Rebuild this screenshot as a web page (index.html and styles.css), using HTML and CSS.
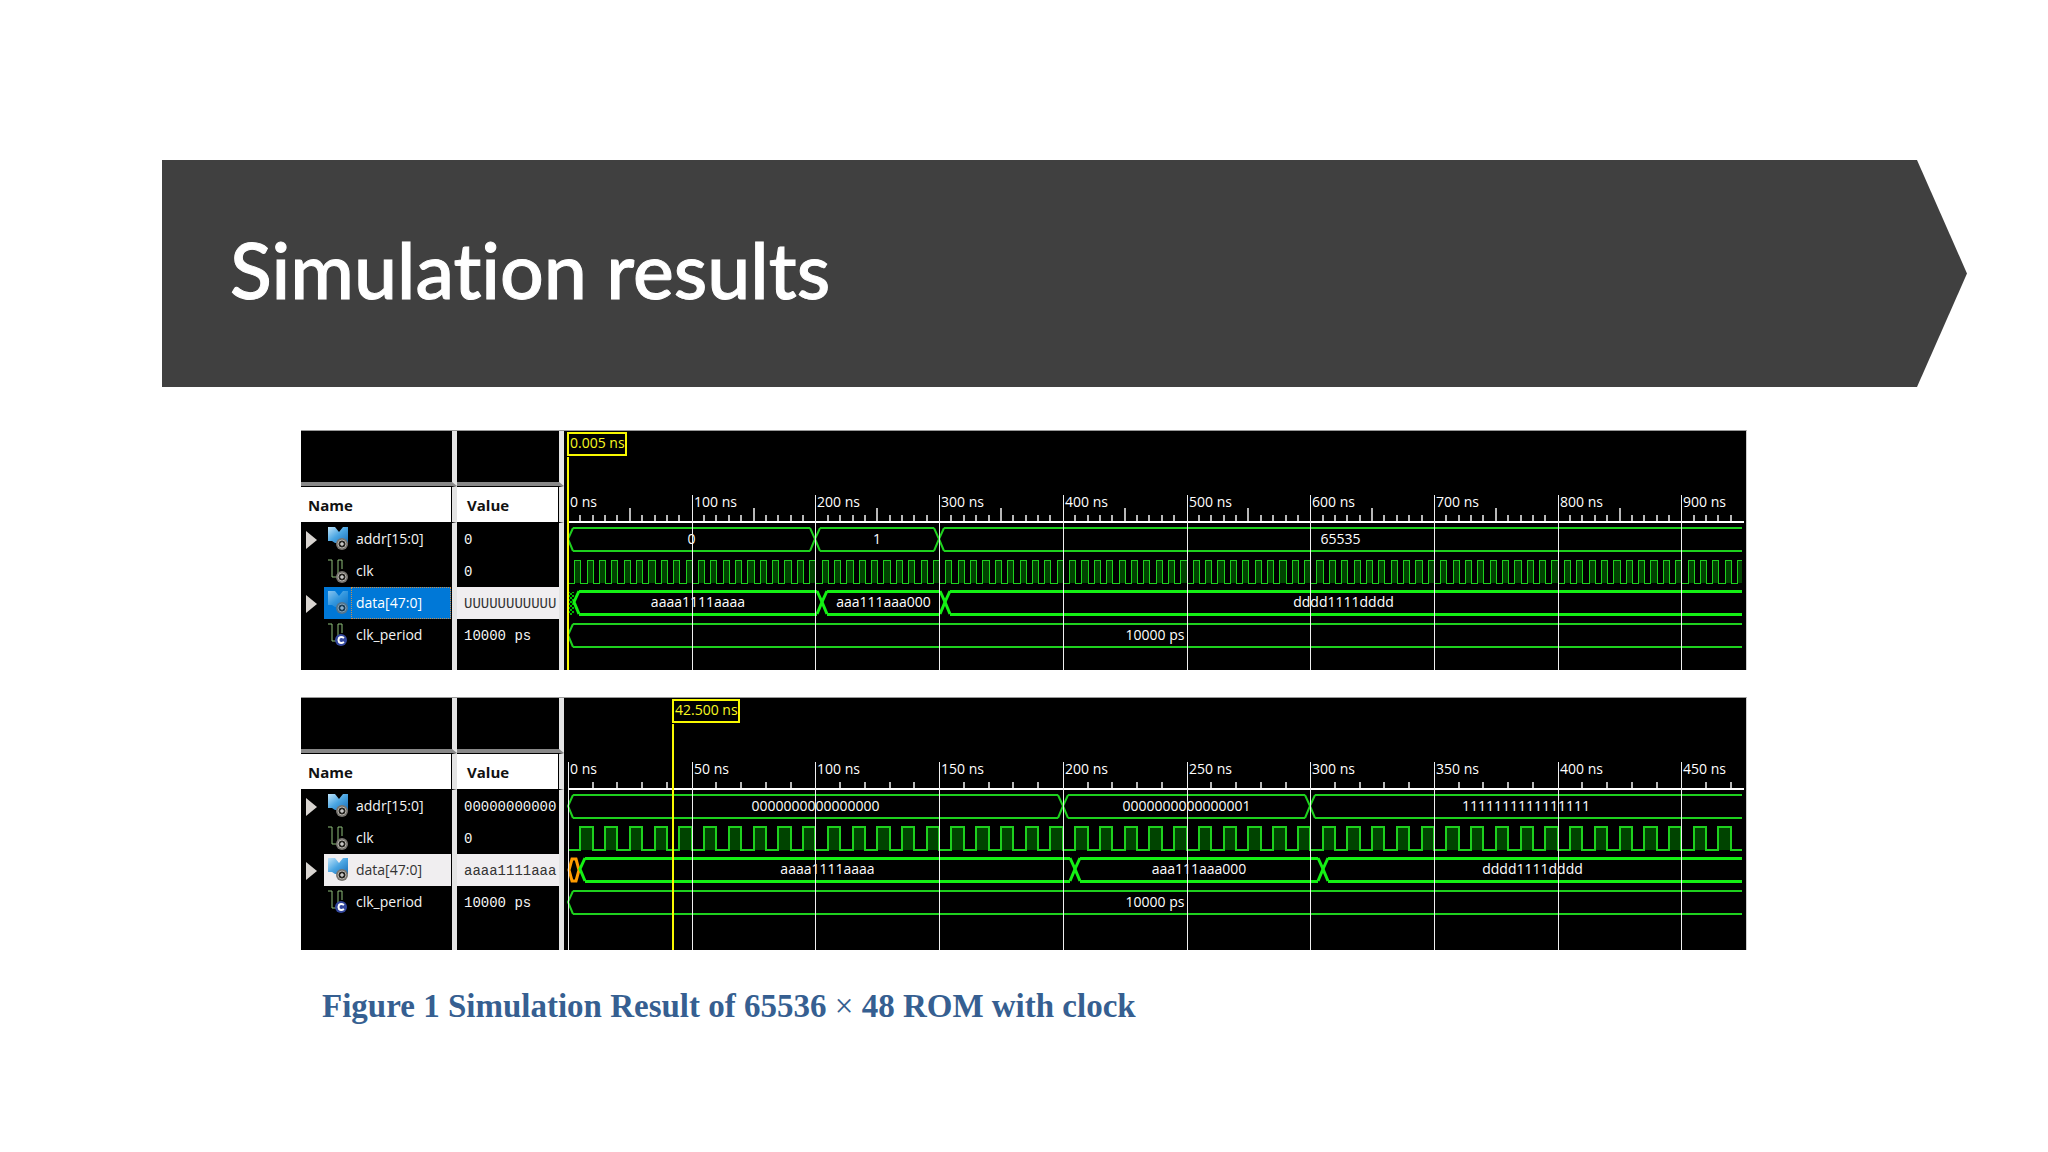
FILE: index.html
```
<!DOCTYPE html>
<html lang="en">
<head>
    <meta charset="utf-8">
    <title>Simulation results</title>
    <meta name="viewport" content="width=device-width, initial-scale=1.0">
    <link rel="stylesheet" href="styles.css">
</head>
<body>
    <!-- Shared icons -->
    <svg class="sprite" aria-hidden="true">
        <defs>
            <linearGradient id="blue" x1="0" y1="0" x2="1" y2="1">
                <stop offset="0" stop-color="#bfe4fa"/>
                <stop offset="0.5" stop-color="#4aa5e2"/>
                <stop offset="1" stop-color="#1b6fb8"/>
            </linearGradient>
            <pattern id="hatch" width="4" height="4" patternUnits="userSpaceOnUse">
                <path d="M0 0h2v2h-2zM2 2h2v2h-2z" fill="#00b400"/>
            </pattern>
        </defs>
        <symbol id="icon-bus" viewBox="0 0 20 24">
            <path d="M0 0h7l4 5 4-5h5v16H7l-3-2H0z" fill="url(#blue)"/>
            <circle class="gear" cx="14" cy="17" r="6"/>
            <circle class="gear-ring" cx="14" cy="17" r="4"/>
            <path class="gear-mark" d="M12 17h4M14 15v4"/>
        </symbol>
        <symbol id="icon-signal" viewBox="0 0 20 24">
            <path d="M0 1h4v17h6V1h4v9" fill="none" stroke="#8fbf7a"/>
            <circle class="gear" cx="14" cy="18" r="6"/>
            <circle class="gear-ring" cx="14" cy="18" r="4"/>
            <path class="gear-mark" d="M12 18h4M14 16v4"/>
        </symbol>
        <symbol id="icon-constant" viewBox="0 0 20 24">
            <path d="M0 1h4v17h6V1h4v9" fill="none" stroke="#8fbf7a"/>
            <circle cx="13" cy="17" r="6" fill="#33479c"/>
            <path d="M16 15q-3-2-5 0-1 2 0 4 2 2 5 0" fill="none" stroke="#fff" stroke-width="2"/>
        </symbol>
        <symbol id="icon-arrow" viewBox="0 0 11 18">
            <path d="M0 0l11 9-11 9z" fill="#d8d4d0"/>
        </symbol>
    </svg>

    <header class="banner">
        <h1>Simulation results</h1>
    </header>

    <main>
        <section class="viewer short">
            <table class="signals">
                <thead>
                    <tr class="blank"><td></td><td></td></tr>
                    <tr class="head"><th>Name</th><th>Value</th></tr>
                </thead>
                <tbody>
                    <tr>
                        <td><div class="signal">
                            <button type="button" aria-label="Expand addr"><svg><use href="#icon-arrow"/></svg></button>
                            <span class="label"><svg class="icon"><use href="#icon-bus"/></svg><span class="text">addr[15:0]</span></span>
                        </div></td>
                        <td class="value">0</td>
                    </tr>
                    <tr>
                        <td><div class="signal">
                            <span class="label"><svg class="icon"><use href="#icon-signal"/></svg><span class="text">clk</span></span>
                        </div></td>
                        <td class="value">0</td>
                    </tr>
                    <tr class="selected active">
                        <td><div class="signal">
                            <button type="button" aria-label="Expand data"><svg><use href="#icon-arrow"/></svg></button>
                            <span class="label"><svg class="icon"><use href="#icon-bus"/></svg><span class="text">data[47:0]</span></span>
                        </div></td>
                        <td class="value">UUUUUUUUUUU</td>
                    </tr>
                    <tr>
                        <td><div class="signal">
                            <span class="label"><svg class="icon"><use href="#icon-constant"/></svg><span class="text">clk_period</span></span>
                        </div></td>
                        <td class="value">10000 ps</td>
                    </tr>
                    <tr class="rest"><td></td><td></td></tr>
                </tbody>
            </table>
            <div class="wave" data-wave="full"></div>
        </section>

        <section class="viewer tall">
            <table class="signals">
                <thead>
                    <tr class="blank"><td></td><td></td></tr>
                    <tr class="head"><th>Name</th><th>Value</th></tr>
                </thead>
                <tbody>
                    <tr>
                        <td><div class="signal">
                            <button type="button" aria-label="Expand addr"><svg><use href="#icon-arrow"/></svg></button>
                            <span class="label"><svg class="icon"><use href="#icon-bus"/></svg><span class="text">addr[15:0]</span></span>
                        </div></td>
                        <td class="value">00000000000</td>
                    </tr>
                    <tr>
                        <td><div class="signal">
                            <span class="label"><svg class="icon"><use href="#icon-signal"/></svg><span class="text">clk</span></span>
                        </div></td>
                        <td class="value">0</td>
                    </tr>
                    <tr class="selected">
                        <td><div class="signal">
                            <button type="button" aria-label="Expand data"><svg><use href="#icon-arrow"/></svg></button>
                            <span class="label"><svg class="icon"><use href="#icon-bus"/></svg><span class="text">data[47:0]</span></span>
                        </div></td>
                        <td class="value">aaaa1111aaa</td>
                    </tr>
                    <tr>
                        <td><div class="signal">
                            <span class="label"><svg class="icon"><use href="#icon-constant"/></svg><span class="text">clk_period</span></span>
                        </div></td>
                        <td class="value">10000 ps</td>
                    </tr>
                    <tr class="rest"><td></td><td></td></tr>
                </tbody>
            </table>
            <div class="wave" data-wave="detail"></div>
        </section>

        <p class="caption">Figure 1 Simulation Result of 65536 <span class="times">×</span> 48 ROM with clock</p>
    </main>

    <script src="wave.js"></script>
</body>
</html>
```
FILE: styles.css
```
body {
    margin: 0;
    background: #fff;
    font-family: "Open Sans", sans-serif;
    font-size: 14px;
}

.sprite {
    position: absolute;
    width: 0;
    height: 0;
}

/* Title banner with the pointed right end */
.banner {
    display: flex;
    align-items: center;
    box-sizing: border-box;
    height: 227px;
    margin: 160px 81px 43px 162px;
    padding: 0 0 10px 68px;
    background: #404040;
    clip-path: polygon(0 0, calc(100% - 50px) 0, 100% 50%, calc(100% - 50px) 100%, 0 100%);
}

h1 {
    margin: 0;
    color: #fff;
    font-family: Lato, sans-serif;
    font-size: 77px;
    font-weight: 500;
    font-variant-ligatures: none;
    line-height: 88px;
    -webkit-text-stroke: 1px #fff;
}

main {
    padding: 0 301px;
}

/* Waveform viewer */
.viewer {
    display: grid;
    grid-template-columns: 263px 1fr;
    box-sizing: border-box;
    margin-bottom: 27px;
    border-top: 1px solid #999;
    border-right: 1px solid #ccc;
    background: #000;
    color: #f4f4f4;
}

.short {
    height: 240px;
}

.tall {
    height: 253px;
}

.signals {
    width: 263px;
    height: 100%;
    table-layout: fixed;
    border-collapse: separate;
    border-spacing: 0;
}

.signals td,
.signals th {
    box-sizing: border-box;
    height: 32px;
    padding: 0;
    border-right: 5px solid #e4e4e4;
    overflow: hidden;
    text-align: left;
    white-space: nowrap;
}

.signals td:first-child,
.signals th:first-child {
    width: 156px;
}

.signals .blank td {
    height: 55px;
    border-bottom: 4px solid #888;
}

.signals .head th {
    height: 37px;
    padding-left: 7px;
    border-top: 1px solid #000;
    border-bottom: 1px solid #000;
    background: #fff;
    color: #111;
    font-size: 15px;
    box-shadow: inset -1px 0 #000;
}

.signals .head th:last-child {
    padding-left: 10px;
}

.signals .rest td {
    height: auto;
}

.signals .value {
    padding: 2px 0 0 7px;
    font-family: "Liberation Mono", monospace;
}

.signal {
    display: flex;
    justify-content: flex-end;
    align-items: center;
    height: 32px;
    padding-right: 1px;
}

.signal button {
    display: flex;
    margin: 2px 7px 0 0;
    padding: 0;
    border: 0;
    background: none;
    cursor: pointer;
}

.signal button svg {
    width: 11px;
    height: 18px;
}

.label {
    display: flex;
    align-items: center;
    width: 127px;
    height: 32px;
}

.icon {
    width: 20px;
    height: 24px;
    margin: 0 3px 0 4px;
}

.text {
    box-sizing: border-box;
    flex: 1;
    height: 32px;
    padding-left: 4px;
    border: 1px solid transparent;
    line-height: 30px;
}

.gear {
    fill: #77746f;
}

.gear-ring {
    fill: #24231f;
    stroke: #b5b2ac;
}

.gear-mark {
    stroke: #fff;
    stroke-width: 1;
}

.selected .label,
.selected .value {
    background: #f0eef0;
    color: #333;
}

.selected .gear,
.selected .gear-ring {
    fill: #3b86c0;
    stroke: #24609a;
}

.active .label {
    background: #0078d7;
    color: #fff;
}

.active .icon {
    opacity: 0.7;
}

.active .text {
    border: 1px dotted #c98d4e;
}

/* Waveform drawing */
.wave {
    min-width: 0;
    overflow: hidden;
}

.wave svg {
    display: block;
    width: 100%;
    height: 100%;
}

.wave path,
.wave rect {
    fill: none;
    shape-rendering: crispEdges;
}

.wave text {
    fill: #fff;
    font-size: 14px;
}

.wave .center {
    text-anchor: middle;
}

.wave .axis {
    stroke: #fff;
    stroke-width: 2;
}

.wave .grid {
    stroke: #b8b8b8;
    stroke-width: 2;
}

.wave .grid.major {
    stroke: #eee;
    stroke-width: 1;
}

.wave .bus {
    stroke: #1ed01e;
    stroke-width: 2;
}

.wave .thin {
    stroke-width: 1;
}

.wave .thick {
    stroke: #14f014;
    stroke-width: 3;
}

.wave .edge {
    shape-rendering: auto;
}

.wave .high {
    fill: #004400;
}

.wave .unknown {
    fill: url(#hatch);
}

.wave .init {
    stroke: #ff9c00;
    stroke-width: 3;
    shape-rendering: auto;
}

.wave .cursor {
    stroke: #f8f800;
    stroke-width: 2;
}

.wave .cursor-text {
    fill: #f8f820;
}

.caption {
    margin: 0;
    padding-left: 21px;
    color: #365f91;
    font-family: "Liberation Serif", serif;
    font-size: 33px;
    font-weight: bold;
    line-height: 58px;
}

.times {
    font-weight: normal;
}
```
FILE: wave.js
```
const waves = {
    full: {
        end: 949, major: 100, minor: 10, cursor: 0, cursorText: '0.005 ns', boxWidth: 58, clock: 'bus thin',
        addr: [[0, 200, '0'], [200, 300, '1'], [300, 949, '65535']],
        data: [[5, 205, 'aaaa1111aaaa'], [205, 305, 'aaa111aaa000'], [305, 949, 'dddd1111dddd']],
        initial: 'unknown'
    },
    detail: {
        end: 474.5, major: 50, minor: 10, cursor: 42.5, cursorText: '42.500 ns', boxWidth: 66, clock: 'bus',
        addr: [[0, 200, '0000000000000000'], [200, 300, '0000000000000001'], [300, 474.5, '1111111111111111']],
        data: [[5, 205, 'aaaa1111aaaa'], [205, 305, 'aaa111aaa000'], [305, 474.5, 'dddd1111dddd']],
        initial: 'init'
    }
};

const ORIGIN = 4;

function draw(box) {
    const w = waves[box.dataset.wave];
    const width = box.clientWidth;
    const height = box.clientHeight;
    const scale = (width - ORIGIN - 4) / w.end;
    const x = t => Math.round(ORIGIN + t * scale);
    let out = '';

    const path = (cls, d) => { out += `<path class="${cls}" d="${d}"/>`; };
    const text = (cls, tx, ty, s) => { out += `<text class="${cls}" x="${tx}" y="${ty}">${s}</text>`; };

    // One bus row: rails, crossing edges and the value in the middle
    function bus(segments, top, cls) {
        const bottom = top + 23;
        const mid = top + 11;
        segments.forEach(([from, to, label]) => {
            const a = x(from);
            const b = x(to);
            const last = to === w.end;
            const c = last ? b : b - 5;
            path(cls, `M${a + 5} ${top}H${c}M${a + 5} ${bottom}H${c}`);
            path(cls + ' edge', `M${a + 5} ${top}L${a} ${mid}L${a + 5} ${bottom}`);
            if (!last) path(cls + ' edge', `M${c} ${top}L${b} ${mid}L${c} ${bottom}`);
            text('center', (a + b) / 2, top + 16, label);
        });
    }

    bus(w.addr, 97, 'bus');

    // Clock, 10 ns period, high in the second half
    let clk = `M${ORIGIN} 152`;
    for (let t = 5; t < w.end; t += 10) {
        const a = x(t);
        const b = x(Math.min(t + 5, w.end));
        out += `<rect class="high" x="${a}" y="129" width="${b - a}" height="23"/>`;
        clk += `H${a}V129H${b}`;
        if (t + 5 < w.end) clk += 'V152';
    }
    if (w.end % 10 < 5) clk += `H${x(w.end)}`;
    path(w.clock, clk);

    if (w.initial === 'unknown') {
        out += `<rect class="unknown" x="${ORIGIN}" y="161" width="6" height="23"/>`;
    } else {
        const a = x(0);
        const b = x(5);
        path('init', `M${a + 1} 172L${a + 4} 161H${b - 4}L${b - 1} 172L${b - 4} 183H${a + 4}Z`);
    }
    bus(w.data, 160, 'thick');
    bus([[0, w.end, '10000 ps']], 193, 'bus');

    // Time axis
    path('axis', `M${ORIGIN} 91H${width - 2}`);
    for (let t = 0; t < w.end; t += w.minor) {
        if (t % w.major === 0) {
            path('grid major', `M${x(t)} 64V${height}`);
            text('', x(t) + 2, 76, t + ' ns');
        } else {
            const half = w.major === 100 && t % 50 === 0;
            path('grid', `M${x(t)} ${half ? 77 : 84}V90`);
        }
    }

    // Cursor and its time flag
    const cx = x(w.cursor);
    path('cursor', `M${cx} 26V${height}`);
    out += `<rect class="cursor" x="${cx}" y="2" width="${w.boxWidth}" height="22"/>`;
    text('cursor-text', cx + 2, 17, w.cursorText);

    box.innerHTML = `<svg>${out}</svg>`;
}

function drawAll() {
    document.querySelectorAll('.wave').forEach(draw);
}

window.addEventListener('resize', drawAll);
drawAll();
```
